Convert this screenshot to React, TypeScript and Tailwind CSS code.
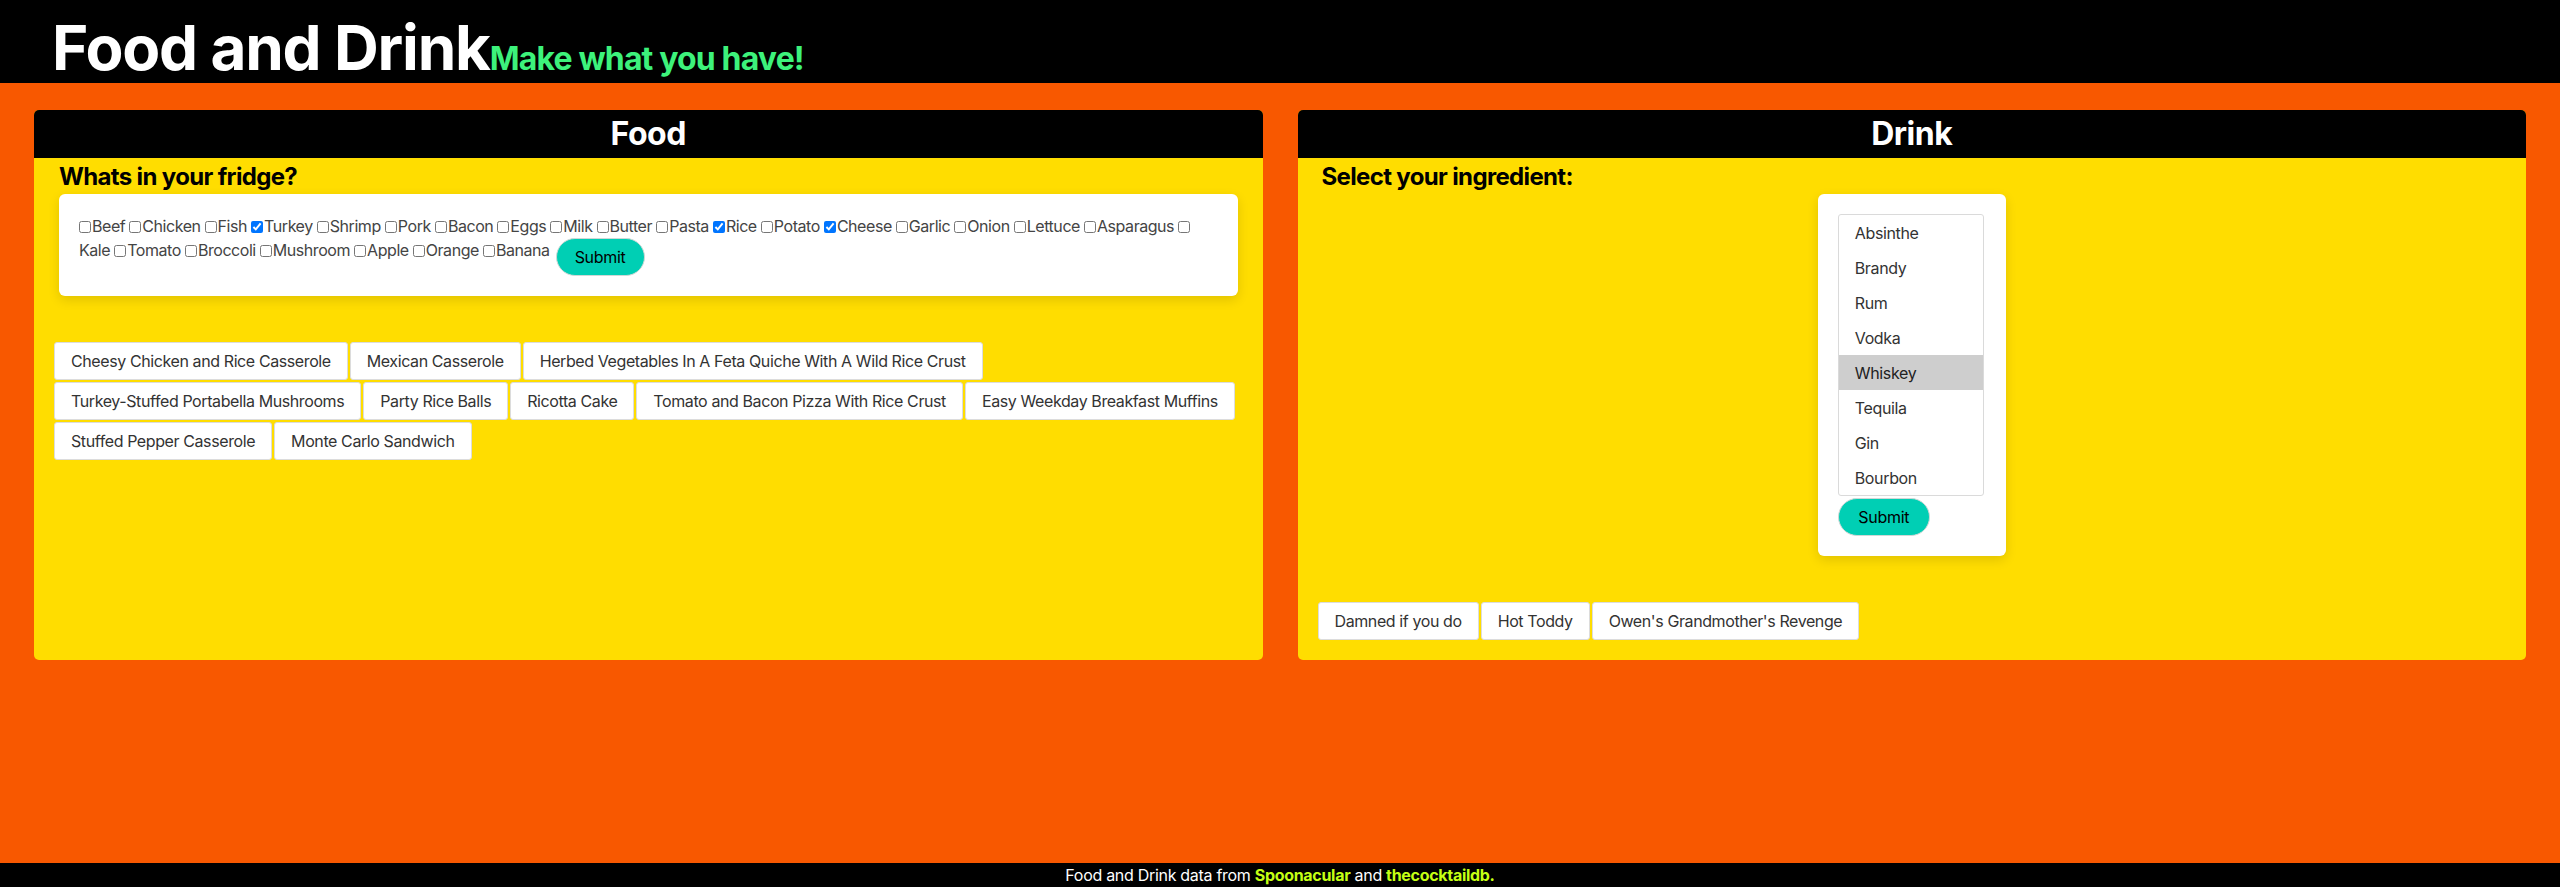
import { useState } from "react";

const INGREDIENTS = [
  "Beef", "Chicken", "Fish", "Turkey", "Shrimp", "Pork", "Bacon", "Eggs", "Milk",
  "Butter", "Pasta", "Rice", "Potato", "Cheese", "Garlic", "Onion", "Lettuce",
  "Asparagus", "Kale", "Tomato", "Broccoli", "Mushroom", "Apple", "Orange", "Banana",
];

const RECIPES = [
  "Cheesy Chicken and Rice Casserole",
  "Mexican Casserole",
  "Herbed Vegetables In A Feta Quiche With A Wild Rice Crust",
  "Turkey-Stuffed Portabella Mushrooms",
  "Party Rice Balls",
  "Ricotta Cake",
  "Tomato and Bacon Pizza With Rice Crust",
  "Easy Weekday Breakfast Muffins",
  "Stuffed Pepper Casserole",
  "Monte Carlo Sandwich",
];

const SPIRITS = ["Absinthe", "Brandy", "Rum", "Vodka", "Whiskey", "Tequila", "Gin", "Bourbon"];

const DRINKS = ["Damned if you do", "Hot Toddy", "Owen's Grandmother's Revenge"];

function ResultList({ items }: { items: string[] }) {
  return (
    <div className="flex flex-wrap gap-[2px] px-5">
      {items.map((r) => (
        <button
          key={r}
          className="h-[38px] px-4 bg-white border border-[#dcdcdc] rounded-[3px] text-[16px] tracking-[-0.4px] text-[#333]">
          {r}
        </button>
      ))}
    </div>
  );
}

function Panel({ title, children }: { title: string; children: React.ReactNode }) {
  return (
    <section className="flex-1 flex flex-col bg-[#ffdd00] rounded-[5px] overflow-hidden pb-5">
      <h2 className="h-[48px] bg-black text-white text-[32px] font-bold text-center leading-[48px] tracking-[-0.5px]">
        {title}
      </h2>
      {children}
    </section>
  );
}

export default function App() {
  const [checked, setChecked] = useState<Record<string, boolean>>({
    Turkey: true,
    Rice: true,
    Cheese: true,
  });
  const [spirit, setSpirit] = useState("Whiskey");

  return (
    <div className="min-h-screen flex flex-col bg-[#f85800] font-['Inter',sans-serif]">
      <header className="h-[83px] bg-black flex items-baseline px-[52px] pt-[13px]">
        <h1 className="text-[62px] font-bold text-white leading-[70px] tracking-[-1.2px]">
          Food and Drink
        </h1>
        <span className="text-[32px] font-bold text-[#3df27b] tracking-[-0.85px]">
          Make what you have!
        </span>
      </header>

      <main className="flex gap-[35px] px-[34px] pt-[27px]">
        <Panel title="Food">
          <h3 className="mt-[4px] ml-[25px] text-[24px] font-bold leading-[29px] tracking-[-0.65px] text-black">
            Whats in your fridge?
          </h3>
          <form
            className="mx-[25px] mt-[3px] mb-[46px] bg-white rounded-md p-5 shadow-[0_4px_12px_rgba(0,0,0,0.12)] text-[16px] leading-[24px] tracking-[-0.45px] text-[#444]"
            onSubmit={(e) => e.preventDefault()}>
            {INGREDIENTS.map((ing) => (
              <span key={ing}>
                <input
                  type="checkbox"
                  checked={!!checked[ing]}
                  onChange={() => setChecked({ ...checked, [ing]: !checked[ing] })}
                  className="inline-block w-[12px] h-[12px] m-0 mr-[1px] align-[-1px]"
                />
                {ing}{" "}
              </span>
            ))}
            <button
              type="submit"
              className="inline-block align-top ml-[2px] h-[38px] px-[18px] rounded-full bg-[#00cfb4] border border-[#cfd8d6] text-black text-[16px] tracking-[-0.3px]">
              Submit
            </button>
          </form>
          <ResultList items={RECIPES} />
        </Panel>

        <Panel title="Drink">
          <h3 className="mt-[4px] ml-[24px] text-[24px] font-bold leading-[29px] tracking-[-0.65px] text-black">
            Select your ingredient:
          </h3>
          <div className="mx-auto mt-[3px] mb-[46px] w-[188px] bg-white rounded-md p-5 shadow-[0_4px_12px_rgba(0,0,0,0.12)]">
            <div className="w-[146px] border border-[#dadada] rounded-[3px] overflow-hidden">
              {SPIRITS.map((s) => (
                <div
                  key={s}
                  onClick={() => setSpirit(s)}
                  className={
                    s === spirit
                      ? "h-[35px] pl-[16px] flex items-center text-[16px] tracking-[-0.35px] text-[#222] bg-[#cecece]"
                      : "h-[35px] pl-[16px] flex items-center text-[16px] tracking-[-0.35px] text-[#333]"
                  }>
                  {s}
                </div>
              ))}
            </div>
            <button className="mt-[2px] h-[38px] w-[92px] rounded-full bg-[#00cfb4] border border-[#cfd8d6] text-black text-[16px] tracking-[-0.3px]">
              Submit
            </button>
          </div>
          <ResultList items={DRINKS} />
        </Panel>
      </main>

      <div className="flex-1" />

      <footer className="h-[24px] bg-black text-white text-[16px] tracking-[-0.3px] flex items-center justify-center">
        <span>
          Food and Drink data from{" "}
          <b className="text-[#c4ff14]">Spoonacular</b> and{" "}
          <b className="text-[#c4ff14]">thecocktaildb.</b>
        </span>
      </footer>
    </div>
  );
}
